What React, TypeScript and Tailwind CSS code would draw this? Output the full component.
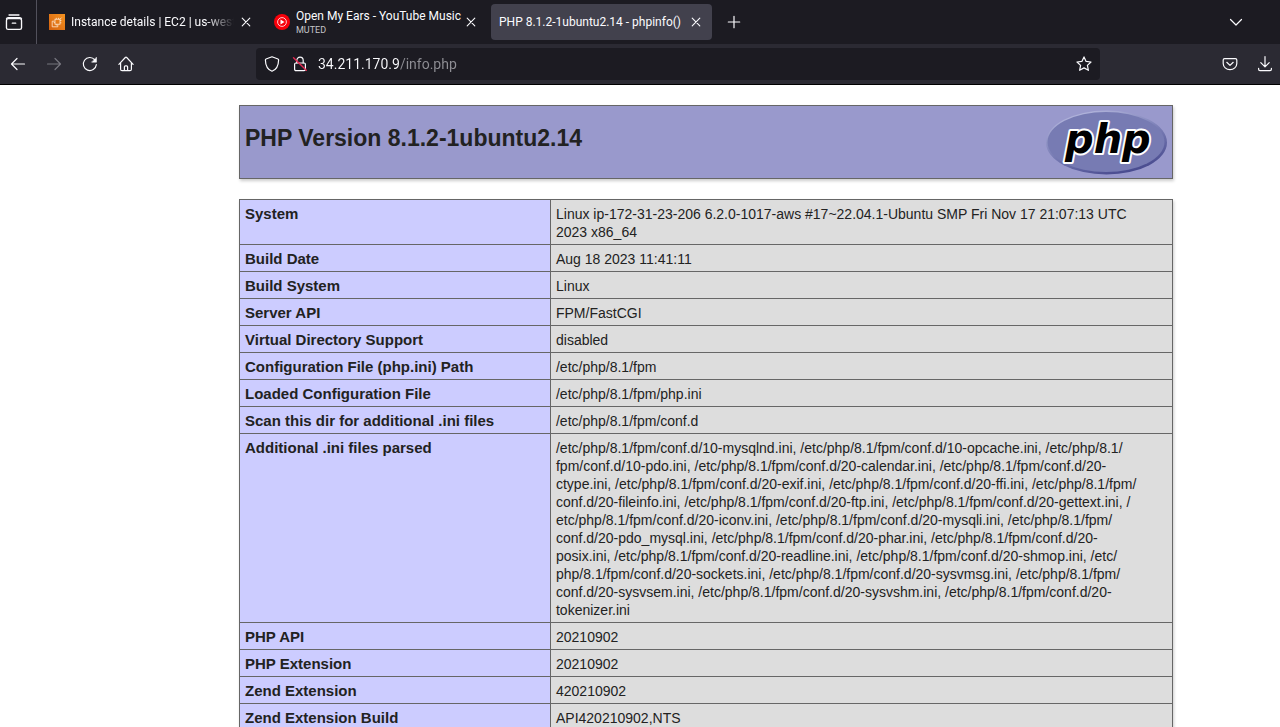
import type { ReactNode } from "react";

type IconProps = { children: ReactNode; size?: number };

function Icon({ children, size = 16 }: IconProps) {
  return (
    <svg
      width={size}
      height={size}
      viewBox="0 0 16 16"
      fill="none"
      stroke="currentColor"
      strokeWidth="1.2"
      strokeLinecap="round"
      strokeLinejoin="round"
      aria-hidden="true"
      className="shrink-0"
    >
      {children}
    </svg>
  );
}

function CloseButton() {
  return (
    <button type="button" aria-label="Close tab" className="grid h-6 w-6 shrink-0 place-items-center rounded">
      <svg width="10" height="10" viewBox="0 0 10 10" stroke="currentColor" strokeWidth="1.1" strokeLinecap="round" aria-hidden="true">
        <path d="M1.2 1.2l7.6 7.6M8.8 1.2L1.2 8.8" />
      </svg>
    </button>
  );
}

function Ec2Icon() {
  return (
    <svg width="16" height="16" viewBox="0 0 16 16" className="shrink-0" aria-hidden="true">
      <defs>
        <linearGradient id="ec2" x1="0" y1="1" x2="1" y2="0">
          <stop offset="0" stopColor="#d4610f" />
          <stop offset="1" stopColor="#f59320" />
        </linearGradient>
      </defs>
      <rect width="16" height="16" fill="url(#ec2)" />
      <g fill="none" stroke="#ffe9d2" strokeWidth="0.8">
        <path d="M5.500 7.200H3.200v5.600h5.600v-2.300" />
        <rect x="6" y="5.200" width="5" height="5" />
        <path d="M7.300 5.200V3.800M9.500 5.200V3.800M11 6.500h1.400M11 8.800h1.400M7.300 10.200v1.300M6 8.600H4.700M11 5.200l1.600-1.600" />
      </g>
    </svg>
  );
}

function MusicIcon() {
  return (
    <svg width="16" height="16" viewBox="0 0 16 16" className="shrink-0" aria-hidden="true">
      <circle cx="8" cy="8" r="8" fill="#f8000a" />
      <circle cx="8" cy="8" r="4.400" fill="none" stroke="#fff" strokeWidth="0.8" />
      <path d="M6.500 5.600v4.800L10.500 8z" fill="#fff" />
    </svg>
  );
}

function PhpLogo() {
  return (
    <svg width="121" height="65" viewBox="0 0 121 65" role="img" aria-label="PHP logo" className="shrink-0">
      <defs>
        <linearGradient id="rim" x1="0.200" y1="0" x2="0.700" y2="1">
          <stop offset="0" stopColor="#b9bbe0" />
          <stop offset="0.450" stopColor="#8084ba" />
          <stop offset="1" stopColor="#45478c" />
        </linearGradient>
      </defs>
      <ellipse cx="60.500" cy="32.500" rx="60.500" ry="32" fill="url(#rim)" />
      <ellipse cx="60" cy="32" rx="58.500" ry="30" fill="#777bb3" />
      <text
        x="19"
        y="43"
        fontSize="40"
        className="[font-family:'DejaVu_Sans',sans-serif] font-bold italic"
        fill="#000"
        stroke="#fff"
        strokeWidth="4"
        strokeLinejoin="round"
        paintOrder="stroke"
      >
        php
      </text>
    </svg>
  );
}

const iniFiles = [
  "/etc/php/8.1/fpm/conf.d/10-mysqlnd.ini, /etc/php/8.1/fpm/conf.d/10-opcache.ini, /etc/php/8.1/",
  "fpm/conf.d/10-pdo.ini, /etc/php/8.1/fpm/conf.d/20-calendar.ini, /etc/php/8.1/fpm/conf.d/20-",
  "ctype.ini, /etc/php/8.1/fpm/conf.d/20-exif.ini, /etc/php/8.1/fpm/conf.d/20-ffi.ini, /etc/php/8.1/fpm/",
  "conf.d/20-fileinfo.ini, /etc/php/8.1/fpm/conf.d/20-ftp.ini, /etc/php/8.1/fpm/conf.d/20-gettext.ini, /",
  "etc/php/8.1/fpm/conf.d/20-iconv.ini, /etc/php/8.1/fpm/conf.d/20-mysqli.ini, /etc/php/8.1/fpm/",
  "conf.d/20-pdo_mysql.ini, /etc/php/8.1/fpm/conf.d/20-phar.ini, /etc/php/8.1/fpm/conf.d/20-",
  "posix.ini, /etc/php/8.1/fpm/conf.d/20-readline.ini, /etc/php/8.1/fpm/conf.d/20-shmop.ini, /etc/",
  "php/8.1/fpm/conf.d/20-sockets.ini, /etc/php/8.1/fpm/conf.d/20-sysvmsg.ini, /etc/php/8.1/fpm/",
  "conf.d/20-sysvsem.ini, /etc/php/8.1/fpm/conf.d/20-sysvshm.ini, /etc/php/8.1/fpm/conf.d/20-",
  "tokenizer.ini",
].join("\n");

const rows: [string, string][] = [
  ["System", "Linux ip-172-31-23-206 6.2.0-1017-aws #17~22.04.1-Ubuntu SMP Fri Nov 17 21:07:13 UTC\n2023 x86_64"],
  ["Build Date", "Aug 18 2023 11:41:11"],
  ["Build System", "Linux"],
  ["Server API", "FPM/FastCGI"],
  ["Virtual Directory Support", "disabled"],
  ["Configuration File (php.ini) Path", "/etc/php/8.1/fpm"],
  ["Loaded Configuration File", "/etc/php/8.1/fpm/php.ini"],
  ["Scan this dir for additional .ini files", "/etc/php/8.1/fpm/conf.d"],
  ["Additional .ini files parsed", iniFiles],
  ["PHP API", "20210902"],
  ["PHP Extension", "20210902"],
  ["Zend Extension", "420210902"],
  ["Zend Extension Build", "API420210902,NTS"],
];

function TabBar() {
  return (
    <header className="flex h-11 items-center bg-[#1c1b22]">
      <div className="flex h-full w-[37px] shrink-0 items-center border-r border-[#52515c] pl-[5px]">
        <button type="button" aria-label="View recent browsing">
          <Icon size={18}>
            <path d="M3.600 1.800h8.800M1.300 5.300q.3-1.200 1.500-1.200h10.400q1.200 0 1.500 1.200" />
            <rect x="1.300" y="5" width="13.400" height="9.600" rx="1.600" />
            <path d="M6.500 9h3" />
          </Icon>
        </button>
      </div>
      <div className="flex h-9 flex-1 items-center gap-1 pl-1 text-xs">
        <div className="flex h-full w-[221px] items-center pl-2 pr-1">
          <Ec2Icon />
          <button
            type="button"
            className="min-w-0 flex-1 whitespace-nowrap pl-1.5 text-left [mask-image:linear-gradient(to_left,transparent,black_28px)]"
          >
            Instance details | EC2 | us-west-
          </button>
          <CloseButton />
        </div>
        <div className="flex h-full w-[221px] items-center pl-2 pr-1">
          <MusicIcon />
          <button type="button" className="min-w-0 flex-1 whitespace-nowrap pl-1.5 text-left">
            <span className="block leading-4">Open My Ears - YouTube Music</span>
            <span className="block text-[9px] leading-3 text-[#c4c4c8]">MUTED</span>
          </button>
          <CloseButton />
        </div>
        <div className="flex h-full w-[221px] items-center rounded bg-[#42414d] pl-2 pr-1">
          <button type="button" className="min-w-0 flex-1 whitespace-nowrap text-left">
            PHP 8.1.2-1ubuntu2.14 - phpinfo()
          </button>
          <CloseButton />
        </div>
        <button type="button" aria-label="New tab" className="grid h-9 w-9 place-items-center">
          <Icon>
            <path d="M8 2.300v11.400M2.300 8h11.400" />
          </Icon>
        </button>
      </div>
      <button type="button" aria-label="List all tabs" className="mr-6 grid h-9 w-10 place-items-center">
        <Icon>
          <path d="M2.500 5.500L8 11l5.500-5.500" />
        </Icon>
      </button>
    </header>
  );
}

function Toolbar() {
  return (
    <div className="flex h-[41px] items-center border-b border-black bg-[#2b2a33]">
      <nav aria-label="Navigation" className="flex w-64 shrink-0">
        <button type="button" aria-label="Back" className="grid h-9 w-9 place-items-center">
          <Icon>
            <path d="M14.500 8h-13M7 2.500L1.500 8 7 13.500" />
          </Icon>
        </button>
        <button type="button" aria-label="Forward" disabled className="grid h-9 w-9 place-items-center text-[#77767f]">
          <Icon>
            <path d="M1.500 8h13M9 2.500L14.500 8 9 13.500" />
          </Icon>
        </button>
        <button type="button" aria-label="Reload" className="grid h-9 w-9 place-items-center">
          <Icon>
            <path d="M14.300 8.700A6.500 6.500 0 1 1 12.800 3.800" />
            <path d="M14.500 1.500v4.700H9.800z" fill="currentColor" strokeWidth="0.500" />
          </Icon>
        </button>
        <button type="button" aria-label="Home" className="grid h-9 w-9 place-items-center">
          <Icon>
            <path d="M.9 8.300L7.300 1.500q.7-.7 1.400 0l6.400 6.800M2.600 6.900v6.300q0 1.500 1.500 1.500h7.800q1.500 0 1.500-1.500V6.900" />
            <path d="M6.400 14.500v-3.700q0-1 1-1h1.200q1 0 1 1v3.700" />
          </Icon>
        </button>
      </nav>
      <div className="flex h-8 min-w-0 flex-1 items-center rounded bg-[#1c1b22] px-2">
        <button type="button" aria-label="Tracking protection">
          <Icon>
            <path d="M8 .8L14 3q.6.200.6.900C14.500 9 12.500 13.500 8 15.200 3.500 13.500 1.500 9 1.400 3.900q0-.7.600-.9z" />
          </Icon>
        </button>
        <button type="button" aria-label="Connection not secure" className="ml-3">
          <Icon>
            <path d="M4.800 7V4.400a3.200 3.200 0 0 1 6.400 0V7" />
            <rect x="2.600" y="7" width="10.800" height="7.600" rx="1.300" />
            <path d="M1.500 1.800l12.800 12.500" stroke="#e22850" strokeWidth="1.400" />
          </Icon>
        </button>
        <input
          type="text"
          aria-label="Address"
          defaultValue="34.211.170.9/info.php"
          className="ml-2.5 h-6 min-w-0 flex-1 bg-[linear-gradient(to_right,#fbfbfe_82px,#8f8f95_82px)] bg-clip-text text-sm text-transparent outline-none"
        />
        <button type="button" aria-label="Bookmark this page">
          <Icon>
            <path d="M8 .9l2.100 4.500 4.900.600-3.600 3.400 1 4.900L8 11.900l-4.400 2.400 1-4.900L1 6l4.900-.600z" />
          </Icon>
        </button>
      </div>
      <div className="flex w-[180px] shrink-0 justify-end">
        <button type="button" aria-label="Save to Pocket" className="grid h-9 w-10 place-items-center">
          <Icon>
            <path d="M2.600 2.700h10.800q1.400 0 1.400 1.400v3.400a6.800 6.200 0 0 1-13.600 0V4.100q0-1.400 1.400-1.400z" />
            <path d="M4.800 6.300L8 9.400l3.200-3.100" />
          </Icon>
        </button>
        <button type="button" aria-label="Downloads" className="grid h-9 w-[30px] place-items-center">
          <Icon>
            <path d="M8 .6v10M3.800 6.600L8 10.800l4.200-4.200M1.600 12.300v1q0 1.400 1.400 1.400h10q1.400 0 1.400-1.400v-1" />
          </Icon>
        </button>
      </div>
    </div>
  );
}

export default function App() {
  return (
    <div className="flex h-screen flex-col bg-white">
      <div className="shrink-0 text-[#fbfbfe] [font-family:Roboto,'Open_Sans',sans-serif]">
        <TabBar />
        <Toolbar />
      </div>
      <main className="min-h-0 flex-1 overflow-hidden pl-[239px] pr-[107px] pt-5 text-[#222] [font-family:'Liberation_Sans',Arial,sans-serif]">
        <section className="flex h-[74px] items-start justify-between border border-[#666] bg-[#9999cc] px-[5px] pt-1 shadow-[1px_2px_3px_#ccc]">
          <h1 className="pt-3 text-[23px] font-bold leading-8">PHP Version 8.1.2-1ubuntu2.14</h1>
          <PhpLogo />
        </section>
        <table className="mt-5 w-full border-collapse leading-[18px] shadow-[1px_2px_3px_#ccc]">
          <tbody>
            {rows.map(([label, value]) => (
              <tr key={label}>
                <th
                  scope="row"
                  className="w-1/3 border border-[#666] bg-[#ccccff] px-[5px] pt-[5px] pb-[3px] text-left align-top text-[15px] font-bold"
                >
                  {label}
                </th>
                <td className="whitespace-pre-line border border-[#666] bg-[#dddddd] px-[5px] pt-[5px] pb-[3px] align-top text-[14px]">
                  {value}
                </td>
              </tr>
            ))}
          </tbody>
        </table>
      </main>
    </div>
  );
}
